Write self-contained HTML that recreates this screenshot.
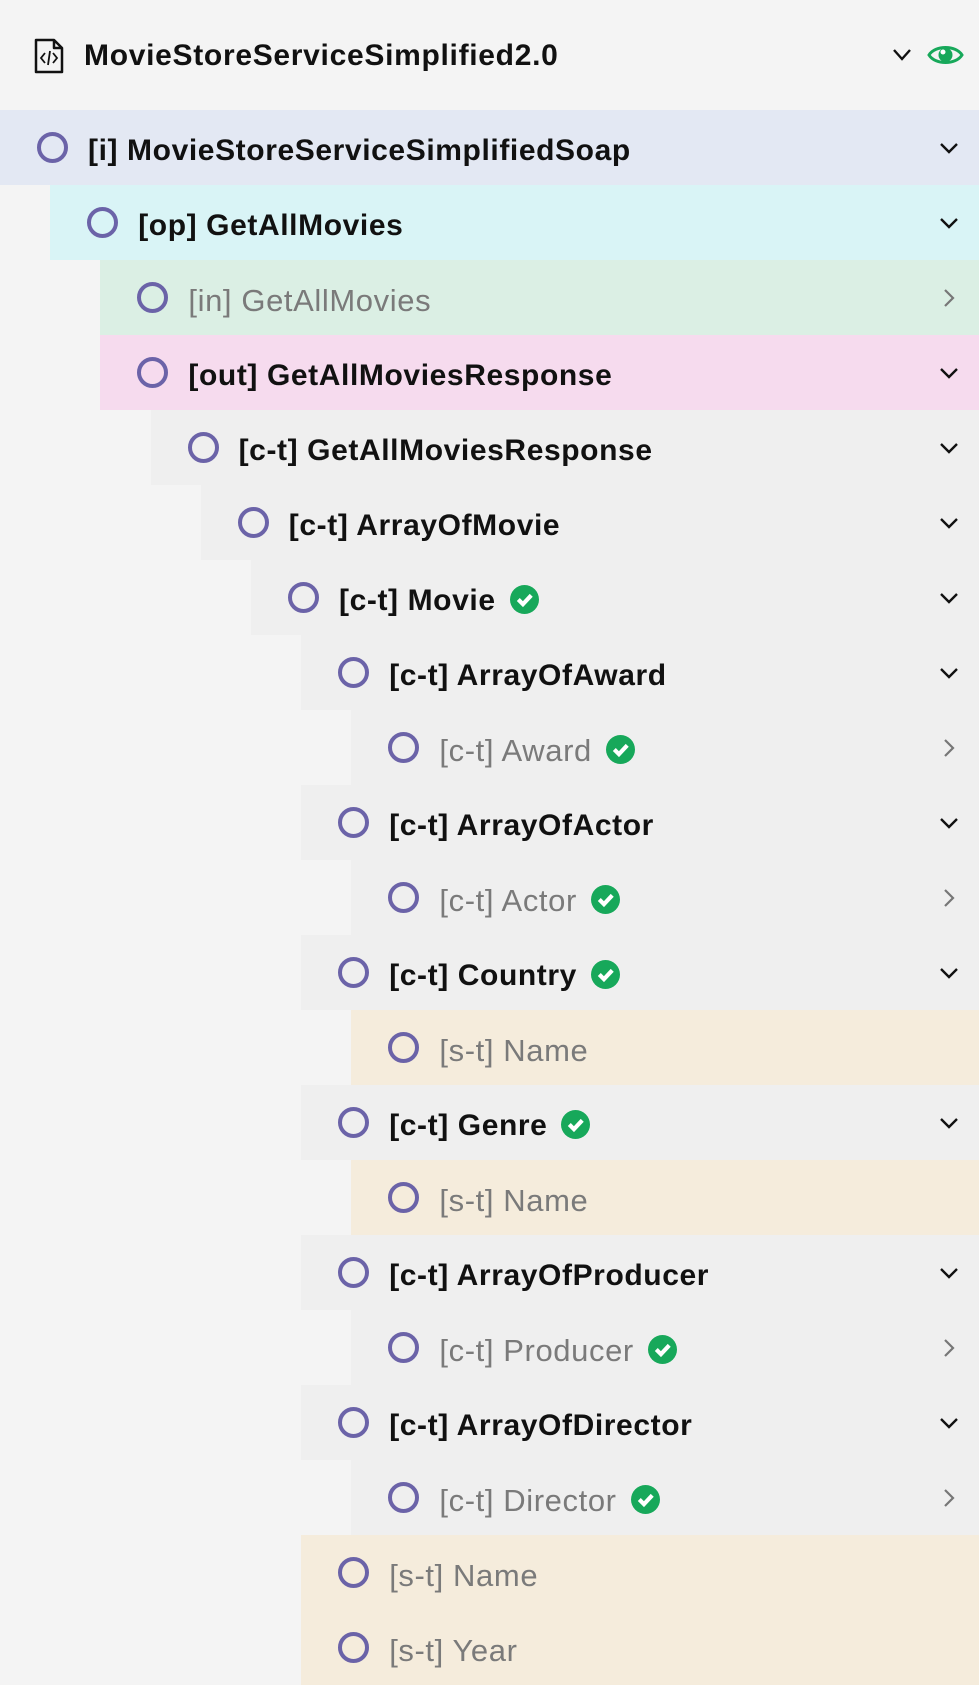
<!DOCTYPE html>
<html><head><meta charset="utf-8"><style>
body{margin:0;width:979px;height:1681px;overflow:hidden;background:#f4f4f4;font-family:"Liberation Sans",sans-serif;}
.hdr{height:110px;position:relative}
.hdr .t{position:absolute;left:84px;top:39px;font-size:30px;font-weight:bold;letter-spacing:0.7px;color:#111}
.row{position:relative;height:75px;display:flex;align-items:center;font-size:30px;letter-spacing:0.6px;color:#111;font-weight:bold}
.row>span:nth-child(2){position:relative;top:3px}
.row .c{width:23px;height:23px;border:4px solid #6b63a8;border-radius:50%;margin-left:37px;margin-right:20px;flex:none}
.row.g{color:#7a7a7a;font-weight:normal;font-size:31px}
.ck{display:inline-block;width:29px;height:29px;border-radius:50%;background:#17a85a;margin-left:14px;position:relative;top:2px}
.ck svg{position:absolute;left:0;top:0}
.ch{position:absolute;right:20px;top:28px}
.i{background:#e3e8f3}.op{background:#d9f4f6}.in{background:#dbefe4}.out{background:#f6dbee}.ct{background:#efefef}.st{background:#f5ecdc}
</style></head><body>
<div class="hdr">
<svg style="position:absolute;left:34px;top:38px" width="30" height="36" viewBox="0 0 30 36"><path d="M2 2h18l8 8v24H2z M20 2v8h8" fill="none" stroke="#111" stroke-width="2.5" stroke-linejoin="round"/><path d="M11 15l-4 5 4 5M19 15l4 5-4 5M16 13l-2 14" fill="none" stroke="#111" stroke-width="1.8"/></svg>
<div class="t">MovieStoreServiceSimplified2.0</div>
<svg style="position:absolute;left:892px;top:48px" width="20" height="14" viewBox="0 0 20 14"><path d="M2 2l8 9 8-9" fill="none" stroke="#111" stroke-width="2.4"/></svg>
<svg style="position:absolute;left:927px;top:42px" width="37" height="26" viewBox="0 0 37 26"><path d="M2 13C8 3 29 3 35 13C29 23 8 23 2 13z" fill="none" stroke="#17a85a" stroke-width="3"/><circle cx="18.5" cy="13" r="7" fill="#17a85a"/><circle cx="16" cy="10" r="2.5" fill="#fff"/></svg>
</div>
<div id="rows"></div>
<script>
var D='<svg class="ch" width="20" height="20" viewBox="0 0 20 20"><path d="M2 6l8 8 8-8" fill="none" stroke="#111" stroke-width="2.4"/></svg>';
var R='<svg class="ch" width="20" height="20" viewBox="0 0 20 20"><path d="M6 2l8 8-8 8" fill="none" stroke="#777" stroke-width="2.2"/></svg>';
var K='<span class="ck"><svg width="29" height="29" viewBox="0 0 28 28"><path d="M8 14l4.5 4.5L20.5 10" fill="none" stroke="#fff" stroke-width="4"/></svg></span>';
var rows=[
[0,'i','[i] MovieStoreServiceSimplifiedSoap',0,D,0],
[1,'op','[op] GetAllMovies',0,D,0],
[2,'in','[in] GetAllMovies',0,R,1],
[2,'out','[out] GetAllMoviesResponse',0,D,0],
[3,'ct','[c-t] GetAllMoviesResponse',0,D,0],
[4,'ct','[c-t] ArrayOfMovie',0,D,0],
[5,'ct','[c-t] Movie',1,D,0],
[6,'ct','[c-t] ArrayOfAward',0,D,0],
[7,'ct','[c-t] Award',1,R,1],
[6,'ct','[c-t] ArrayOfActor',0,D,0],
[7,'ct','[c-t] Actor',1,R,1],
[6,'ct','[c-t] Country',1,D,0],
[7,'st','[s-t] Name',0,'',1],
[6,'ct','[c-t] Genre',1,D,0],
[7,'st','[s-t] Name',0,'',1],
[6,'ct','[c-t] ArrayOfProducer',0,D,0],
[7,'ct','[c-t] Producer',1,R,1],
[6,'ct','[c-t] ArrayOfDirector',0,D,0],
[7,'ct','[c-t] Director',1,R,1],
[6,'st','[s-t] Name',0,'',1],
[6,'st','[s-t] Year',0,'',1]];
var h='';
rows.forEach(function(r){h+='<div class="row '+r[1]+(r[5]?' g':'')+'" style="margin-left:'+(r[0]*50.2)+'px"><span class="c"></span><span>'+r[2]+'</span>'+(r[3]?K:'')+r[4]+'</div>';});
document.getElementById('rows').innerHTML=h;
</script>
</body></html>
